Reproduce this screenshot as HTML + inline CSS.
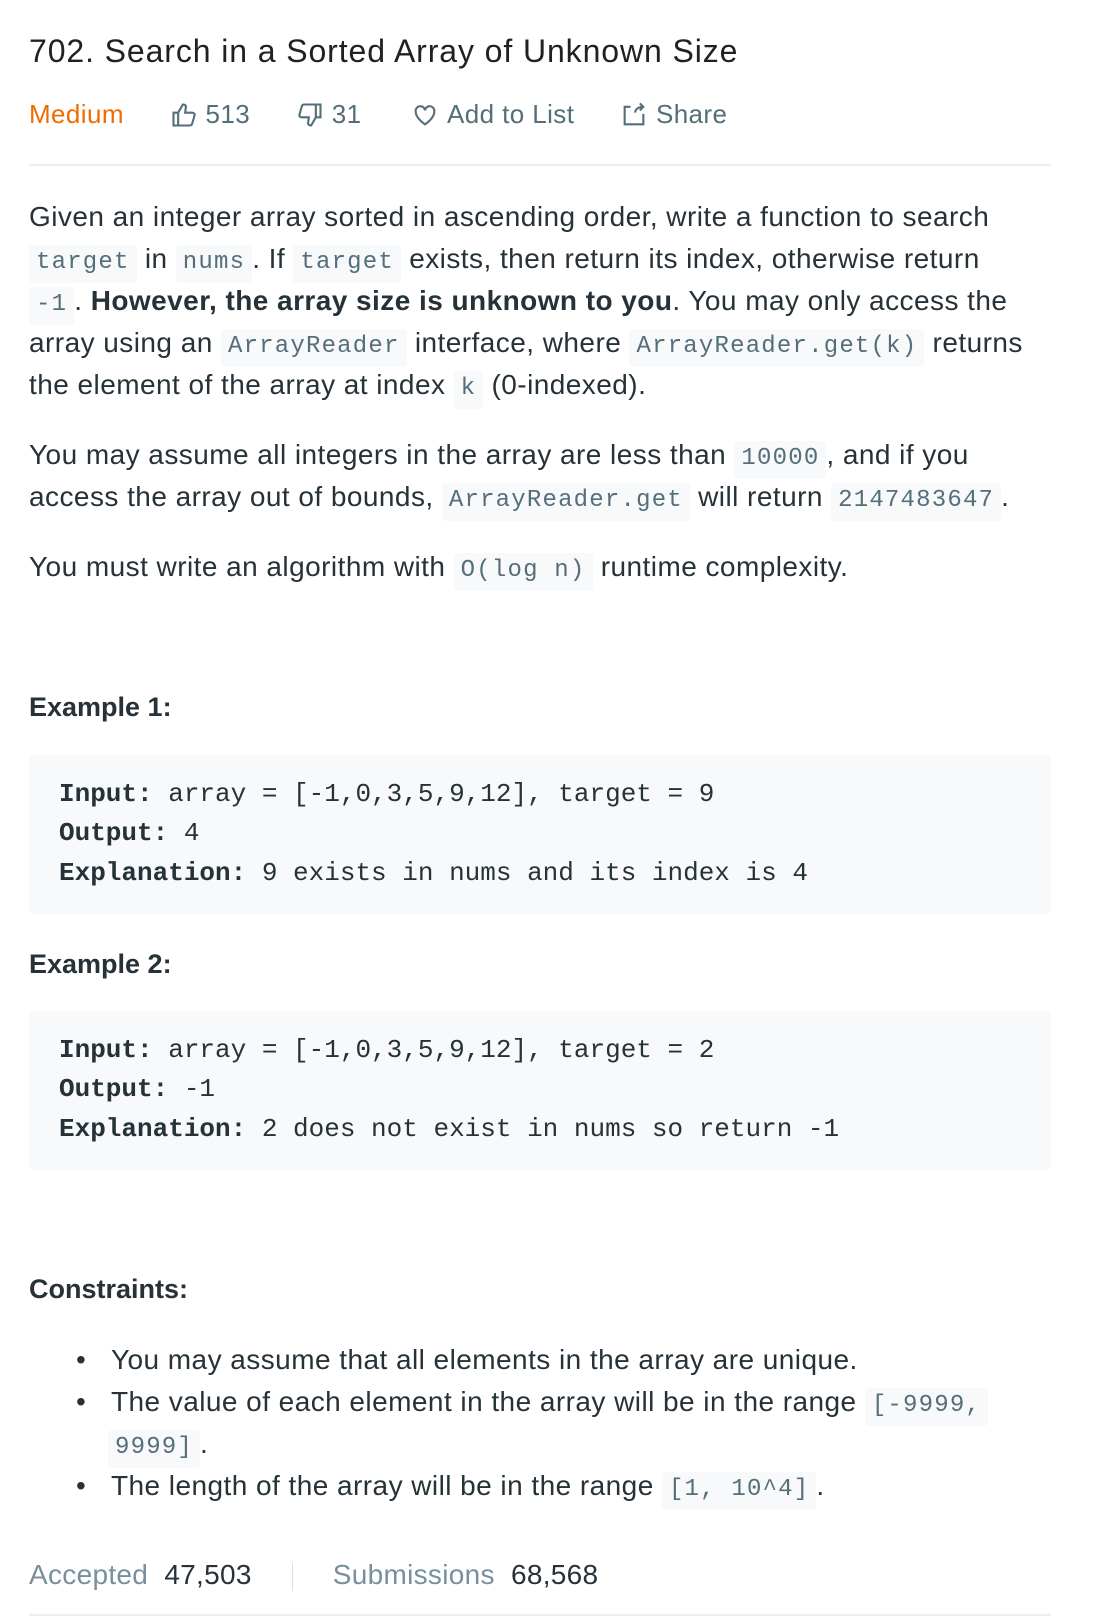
<!DOCTYPE html>
<html><head><meta charset="utf-8"><style>
body{margin:0;width:1096px;height:1620px;background:#fff;font-family:"Liberation Sans",sans-serif;color:#263238;position:relative;overflow:hidden}
.a{position:absolute;left:29px;white-space:nowrap}
.t{font-size:32px;letter-spacing:0.9px;font-weight:500;color:#212121;top:33px}
.meta{top:99px;font-size:26px;letter-spacing:0.4px;color:#546e7a;display:flex;align-items:center}
.meta span{display:inline-flex;align-items:center}
hr.l{position:absolute;left:29px;width:1022px;border:0;border-top:2px solid #eceff1;margin:0}
.p{font-size:28px;letter-spacing:0.45px;line-height:42px}
.p>div{height:42px}
code{font-family:"Liberation Mono",monospace;font-size:24px;letter-spacing:1.2px;line-height:24px;display:inline-block;color:#546e7a;background:#f7f9fa;border-radius:4px;padding:6px 7px 8px;vertical-align:baseline}
.h{font-size:27px;font-weight:bold;color:#263238}
.pre{position:absolute;left:29px;width:1022px;background:#f7f9fa;border-radius:5px;font-family:"Liberation Mono",monospace;font-size:26px;color:#263238}
.pre div{position:absolute;left:30px;white-space:pre}
</style></head><body>
<div class="a t">702. Search in a Sorted Array of Unknown Size</div>
<div class="a meta">
<span style="color:#ef6c00;margin-right:46px">Medium</span>
<span style="margin-right:46px"><svg width="28" height="28" viewBox="0 0 24 24" fill="none" stroke="#546e7a" stroke-width="1.8"><path d="M3 10h4v11H3zM7 10l4-7c2 0 3 1 2.5 3L13 10h6c1.5 0 2.5 1.2 2 2.5l-2 7c-.3 1-1 1.5-2 1.5H7"/></svg>&nbsp;513</span>
<span style="margin-right:50px"><svg width="28" height="28" viewBox="0 0 24 24" fill="none" stroke="#546e7a" stroke-width="1.8"><path d="M21 14h-4V3h4zM17 14l-4 7c-2 0-3-1-2.5-3L11 14H5c-1.5 0-2.5-1.2-2-2.5l2-7C5.3 3.5 6 3 7 3h10"/></svg>&nbsp;31</span>
<span style="margin-right:46px"><svg width="28" height="28" viewBox="0 0 24 24" fill="none" stroke="#546e7a" stroke-width="1.8"><path d="M12 20s-8-5-8-11a4 4 0 0 1 8-1 4 4 0 0 1 8 1c0 6-8 11-8 11z"/></svg>&nbsp;Add to List</span>
<span><svg width="28" height="28" viewBox="0 0 24 24" fill="none" stroke="#546e7a" stroke-width="1.8"><path d="M9 5H4v15h16v-9M13 10c0-3 3-5 7-5M17 2l3 3-3 3"/></svg>&nbsp;Share</span>
</div>
<hr class="l" style="top:164px">
<div class="a p" style="top:196px"><div>Given an integer array sorted in ascending order, write a function to search</div><div><code>target</code> in <code>nums</code>. If <code>target</code> exists, then return its index, otherwise return</div><div><code>-1</code>. <b>However, the array size is unknown to you</b>. You may only access the</div><div>array using an <code>ArrayReader</code> interface, where <code>ArrayReader.get(k)</code> returns</div><div>the element of the array at index <code>k</code> (0-indexed).</div></div>
<div class="a p" style="top:434px"><div>You may assume all integers in the array are less than <code>10000</code>, and if you</div><div>access the array out of bounds, <code>ArrayReader.get</code> will return <code>2147483647</code>.</div></div>
<div class="a p" style="top:546px"><div>You must write an algorithm with <code>O(log n)</code> runtime complexity.</div></div>
<div class="a h" style="top:692px">Example 1:</div>
<div class="pre" style="top:755px;height:159px">
<div style="top:24px"><b>Input:</b> array = [-1,0,3,5,9,12], target = 9</div>
<div style="top:63px"><b>Output:</b> 4</div>
<div style="top:103px"><b>Explanation:</b> 9 exists in nums and its index is 4</div>
</div>
<div class="a h" style="top:949px">Example 2:</div>
<div class="pre" style="top:1011px;height:159px">
<div style="top:24px"><b>Input:</b> array = [-1,0,3,5,9,12], target = 2</div>
<div style="top:63px"><b>Output:</b> -1</div>
<div style="top:103px"><b>Explanation:</b> 2 does not exist in nums so return -1</div>
</div>
<div class="a h" style="top:1274px">Constraints:</div>
<div class="a p" style="top:1339px;left:76px">
<div>•&nbsp;&nbsp;&nbsp;You may assume that all elements in the array are unique.</div>
<div>•&nbsp;&nbsp;&nbsp;The value of each element in the array will be in the range <code>[-9999,</code></div>
<div style="padding-left:32px"><code>9999]</code>.</div>
<div>•&nbsp;&nbsp;&nbsp;The length of the array will be in the range <code>[1, 10^4]</code>.</div>
</div>
<div class="a" style="top:1559px;font-size:28px;letter-spacing:0.3px;color:#78909c">Accepted&nbsp;&nbsp;<span style="color:#263238">47,503</span><span style="display:inline-block;width:1px;height:28px;background:#e0e0e0;margin:0 40px;vertical-align:middle"></span>Submissions&nbsp;&nbsp;<span style="color:#263238">68,568</span></div>
<hr class="l" style="top:1614px">
</body></html>
